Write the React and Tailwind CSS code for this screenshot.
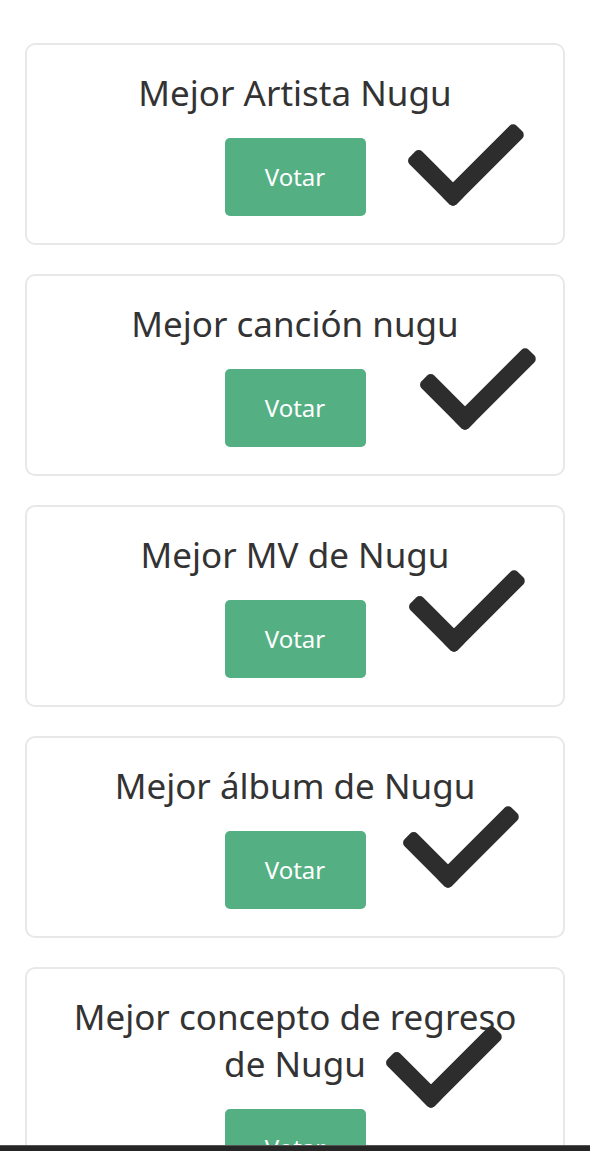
const CATEGORIAS = [
  { id: 1, titulo: 'Mejor Artista Nugu', check: 'left-[379px] top-[77px]' },
  { id: 2, titulo: 'Mejor canción nugu', check: 'left-[391px] top-[70px]' },
  { id: 3, titulo: 'Mejor MV de Nugu', check: 'left-[380px] top-[61px]' },
  { id: 4, titulo: 'Mejor álbum de Nugu', check: 'left-[374px] top-[66px]' },
  { id: 5, titulo: 'Mejor concepto de regreso de Nugu', check: 'left-[357px] top-[55px]' }
];

function Check({ className }) {
  return (
    <svg
      width="120"
      height="84"
      viewBox="0 0 120 84"
      className={`absolute pointer-events-none ${className}`}
    >
      <g transform="translate(47 73)" fill="#2d2d2d">
        <rect transform="rotate(-45)" x="-9" y="-9" width="103" height="18" rx="5" />
        <rect transform="rotate(-135)" x="-9" y="-9" width="66.5" height="18" rx="5" />
      </g>
    </svg>
  );
}

function Tarjeta({ cat }) {
  return (
    <div className="relative border-2 border-[#e8e8e8] rounded-[10px] bg-white pt-[24px] pb-[27px] px-[35px] text-center">
      <h2 className="text-[35px] leading-[47px] text-[#333] font-normal">{cat.titulo}</h2>
      <button className="mt-[22px] mx-auto flex items-center justify-center w-[141px] h-[78px] rounded-[5px] bg-[#54b082] text-white text-[24px]">
        Votar
      </button>
      <Check className={cat.check} />
    </div>
  );
}

export default function App() {
  return (
    <div
      className="min-h-screen bg-white px-[25px] pt-[43px] pb-10 flex flex-col gap-[29px]"
      style={{ fontFamily: '"Noto Sans", "Open Sans", sans-serif' }}
    >
      {CATEGORIAS.map((cat) => (
        <Tarjeta key={cat.id} cat={cat} />
      ))}
      <div className="fixed bottom-0 left-0 right-0 h-[6px] bg-[#262626] border-t border-[#555]" />
    </div>
  );
}
